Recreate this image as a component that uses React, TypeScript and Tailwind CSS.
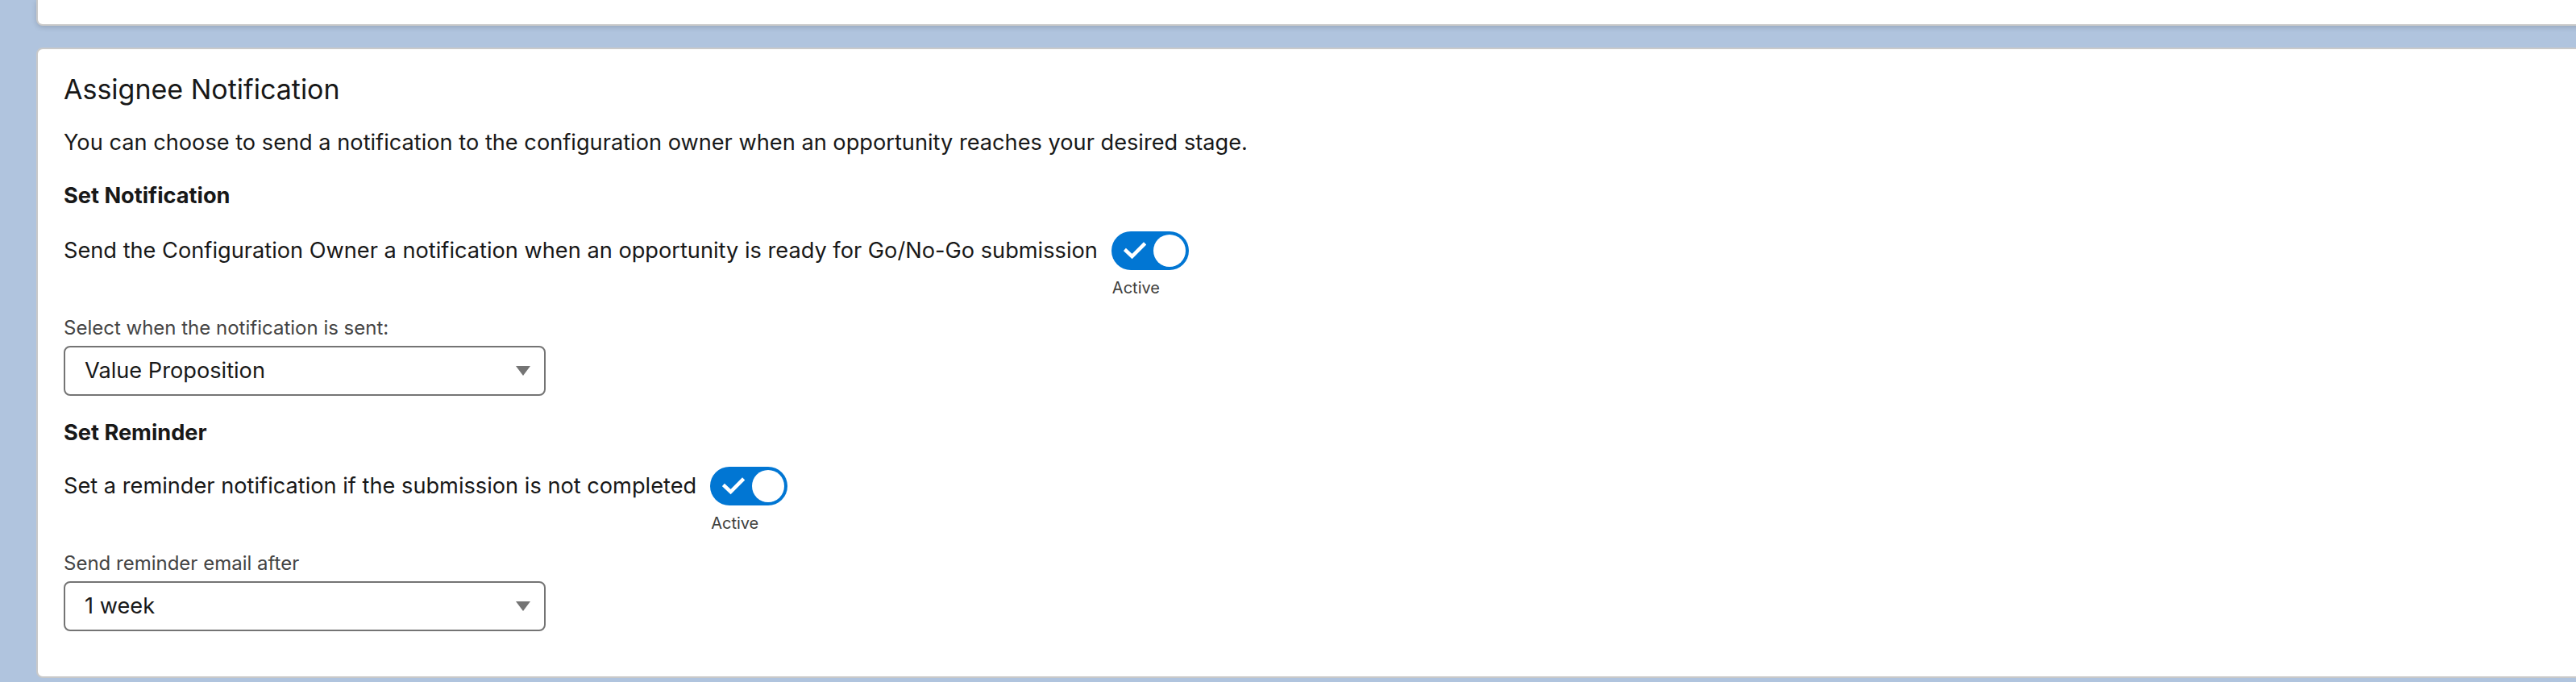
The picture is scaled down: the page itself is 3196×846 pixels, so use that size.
import React from 'react';

/**
 * Assignee notification settings card
 */

const Toggle: React.FC<{ label: string }> = ({ label }) => (
  <div className="flex flex-col items-start">
    <div className="flex items-center justify-between w-[96px] h-[48px] rounded-full bg-[#0176d3] pl-[15px] pr-[4px]">
      <svg width="28" height="22" viewBox="0 0 28 22" fill="none">
        <path d="M3 11 L10.5 18 L25 3.5" stroke="white" strokeWidth="4.5" strokeLinecap="square" />
      </svg>
      <div className="w-[40px] h-[40px] rounded-full bg-white" />
    </div>
    <span className="mt-[10px] text-[20px] leading-[24px] text-[#3e3e3c] pl-[1px]">{label}</span>
  </div>
);

const Select: React.FC<{ value: string }> = ({ value }) => (
  <div className="flex items-center justify-between w-[598px] h-[62px] border-2 border-[#747474] rounded-[8px] pl-[24px] pr-[17px] bg-white">
    <span className="text-[27.2px] text-[#181818]">{value}</span>
    <svg width="18" height="12" viewBox="0 0 18 12">
      <path d="M0 0 H18 L9 12 Z" fill="#747474" />
    </svg>
  </div>
);

export default function App() {
  return (
    <div className="min-h-screen bg-[#b0c4de] overflow-hidden pl-[45px] font-['Inter',sans-serif] text-[#181818]">
      {/* Previous card (cut off at top) */}
      <div className="h-[32px] w-[3300px] bg-white border-2 border-t-0 border-[#c9c9c9] rounded-b-[8px] shadow-[0_2px_6px_rgba(0,0,0,0.15)]" />

      {/* Assignee Notification card */}
      <div className="mt-[27px] w-[3300px] bg-white border-2 border-[#c9c9c9] rounded-[8px] pl-[32px] pt-[26px] pb-[56px]">
        <h2 className="text-[34px] leading-[48px]">Assignee Notification</h2>
        <p className="mt-[22px] text-[27.2px] leading-[40px]">
          You can choose to send a notification to the configuration owner when an opportunity reaches your desired stage.
        </p>

        <h3 className="mt-[26px] text-[27.2px] leading-[40px] font-bold">Set Notification</h3>
        <div className="mt-[24px] flex items-start gap-[17px]">
          <span className="text-[27.2px] leading-[40px] mt-[4px]">
            Send the Configuration Owner a notification when an opportunity is ready for Go/No-Go submission
          </span>
          <Toggle label="Active" />
        </div>

        <label className="block mt-[22px] text-[24px] leading-[32px] text-[#444444]">
          Select when the notification is sent:
        </label>
        <div className="mt-[6px]">
          <Select value="Value Proposition" />
        </div>

        <h3 className="mt-[26px] text-[27.2px] leading-[40px] font-bold">Set Reminder</h3>
        <div className="mt-[22px] flex items-start gap-[17px]">
          <span className="text-[27.2px] leading-[40px] mt-[4px]">
            Set a reminder notification if the submission is not completed
          </span>
          <Toggle label="Active" />
        </div>

        <label className="block mt-[22px] text-[24px] leading-[32px] text-[#444444]">
          Send reminder email after
        </label>
        <div className="mt-[6px]">
          <Select value="1 week" />
        </div>
      </div>
    </div>
  );
}
